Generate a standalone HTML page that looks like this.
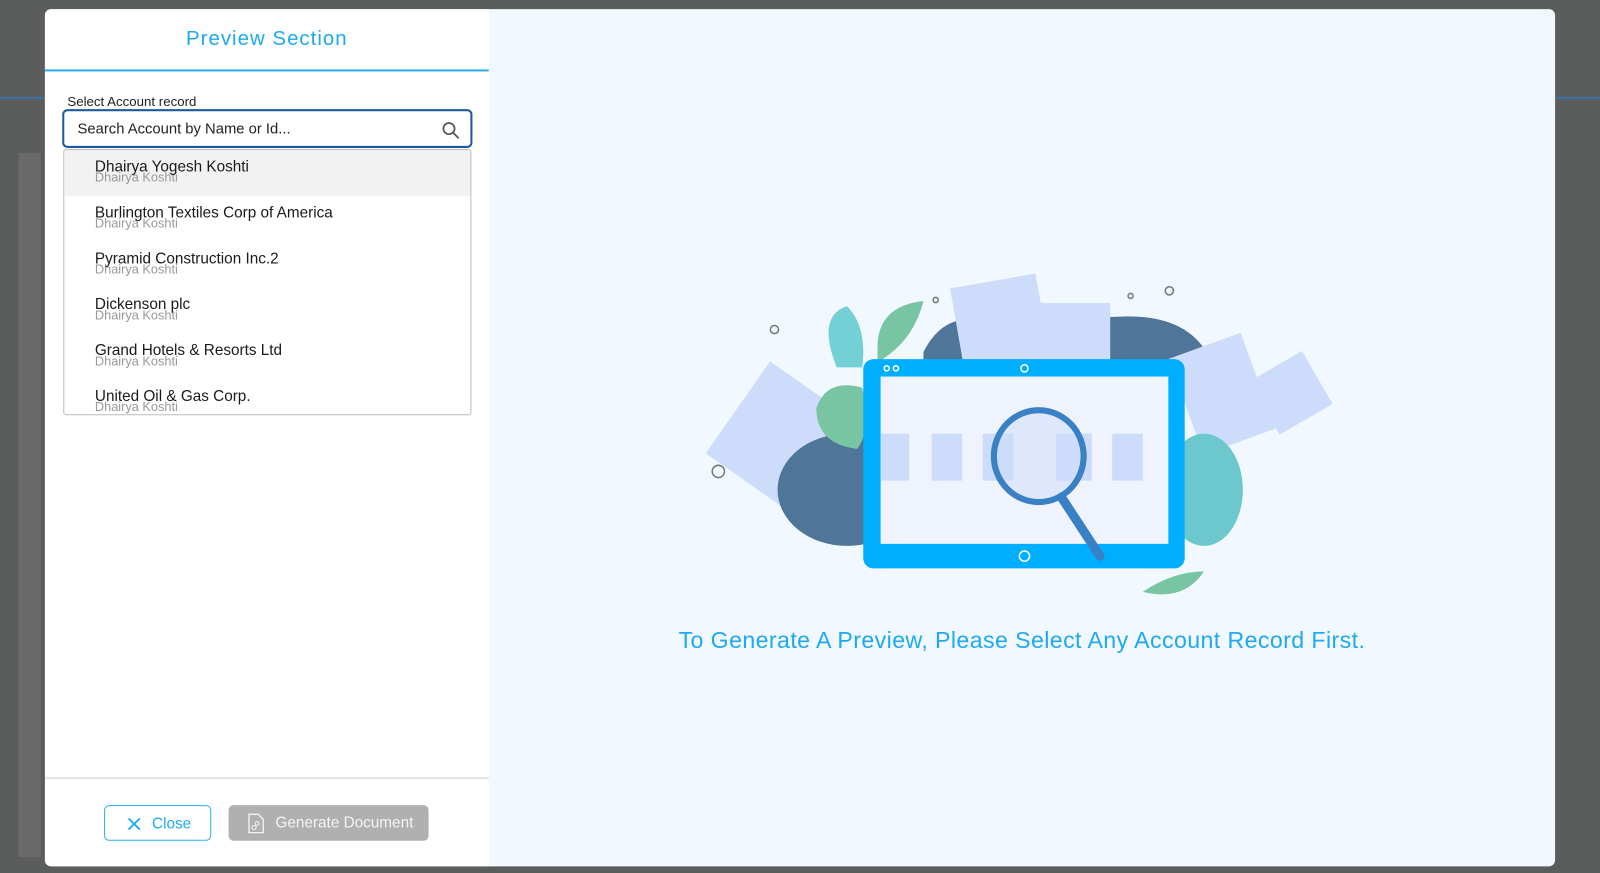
<!DOCTYPE html>
<html><head><style>
*{margin:0;padding:0;box-sizing:border-box}
body{width:1600px;height:873px;background:#5b5c5c;font-family:"Liberation Sans",Arial,sans-serif;position:relative;overflow:hidden}
#w{position:absolute;left:0;top:0;width:1568px;height:856px;transform:scale(1.0204);transform-origin:0 0}
.modal{position:absolute;left:44px;top:9px;width:1480px;height:840px;border-radius:6px;overflow:hidden;background:#f2f8ff}
.left{position:absolute;left:0;top:0;width:435px;height:840px;background:#fff}
.title{position:absolute;top:18px;width:435px;text-align:center;color:#1ea9f0;font-size:20px;letter-spacing:1px}
.hline{position:absolute;top:59px;left:0;width:435px;height:2px;background:#2aaef0}
.lbl{position:absolute;left:22px;top:83px;font-size:13px;color:#222}
.search{position:absolute;left:17px;top:98px;width:402px;height:38px;border:2px solid #1b5aa0;border-radius:5px;font-size:14.5px;color:#222;padding:10px 0 0 13px}
.dd{position:absolute;left:18px;top:137px;width:400px;height:261px;border:1px solid #bbb;border-radius:3px;overflow:hidden;background:#fff}
.it{height:45px;position:relative}
.it.h{background:#f2f2f2}
.it .a{position:absolute;left:30px;top:8px;font-size:15px;color:#1a1a1a}
.it .b{position:absolute;left:30px;top:20px;font-size:12.5px;color:#999}
.fline{position:absolute;top:753px;left:0;width:435px;height:1px;background:#ccc}
.btn{position:absolute;top:780px;height:35px;border-radius:5px;font-size:15px}
.close{left:58px;width:105px;border:1px solid #2aaef0;color:#1ea9f0;padding:9px 0 0 46px}
.gen{left:180px;width:196px;background:#b0b0b0;color:#f4f4f4;padding:9px 0 0 46px}
.msg{position:absolute;left:435px;width:1045px;top:605px;text-align:center;font-size:22.7px;color:#1ea9f0;letter-spacing:.4px}
</style></head><body>
<div id="w">
<div style="position:absolute;left:0;top:95px;width:1568px;height:2px;background:#3d6fa8"></div>
<div style="position:absolute;left:18px;top:150px;width:22px;height:690px;background:#6a6a6a"></div>
<div class="modal">
<div class="left">
<div class="title">Preview Section</div>
<div class="hline"></div>
<div class="lbl">Select Account record</div>
<div class="search">Search Account by Name or Id...
<svg style="position:absolute;right:10px;top:10px" width="18" height="18" viewBox="0 0 18 18"><circle cx="7" cy="7" r="5.5" fill="none" stroke="#555" stroke-width="1.7"/><path d="M11 11l5.5 5.5" stroke="#555" stroke-width="1.8"/></svg></div>
<div class="dd">
<div class="it h"><div class="b">Dhairya Koshti</div><div class="a">Dhairya Yogesh Koshti</div></div>
<div class="it"><div class="b">Dhairya Koshti</div><div class="a">Burlington Textiles Corp of America</div></div>
<div class="it"><div class="b">Dhairya Koshti</div><div class="a">Pyramid Construction Inc.2</div></div>
<div class="it"><div class="b">Dhairya Koshti</div><div class="a">Dickenson plc</div></div>
<div class="it"><div class="b">Dhairya Koshti</div><div class="a">Grand Hotels &amp; Resorts Ltd</div></div>
<div class="it"><div class="b">Dhairya Koshti</div><div class="a">United Oil &amp; Gas Corp.</div></div>
</div>
<div class="fline"></div>
<div class="btn close"><svg style="position:absolute;left:22px;top:11px" width="13" height="13" viewBox="0 0 13 13"><path d="M1 1l11 11M12 1L1 12" stroke="#1ea9f0" stroke-width="1.8"/></svg>Close</div>
<div class="btn gen"><svg style="position:absolute;left:19px;top:8px" width="16" height="20" viewBox="0 0 16 20"><path d="M1 1h9l5 5v13H1z" fill="none" stroke="#f4f4f4" stroke-width="1.3"/><circle cx="9" cy="10" r="1.8" fill="none" stroke="#f4f4f4"/><circle cx="6" cy="14" r="2" fill="none" stroke="#f4f4f4"/></svg>Generate Document</div>
</div>
<svg style="position:absolute;left:646px;top:251px" width="630" height="340" viewBox="690 260 630 340">
<g fill="none" stroke="#777" stroke-width="1.5"><circle cx="759" cy="323" r="4"/><circle cx="704" cy="462" r="6"/><circle cx="917" cy="294" r="2.5"/><circle cx="1108" cy="290" r="2.5"/><circle cx="1146" cy="285" r="4"/></g>
<rect x="715" y="370" width="90" height="110" fill="#cddcfa" transform="rotate(35 760 425)"/>
<ellipse cx="830" cy="480" rx="68" ry="55" fill="#4f7698"/>
<path d="M905 345q20-40 60-30l140 -5q60 0 80 40l0 30H905z" fill="#4f7698"/>
<rect x="940" y="275" width="85" height="110" fill="#cddcfa" transform="rotate(-10 980 330)"/>
<rect x="1000" y="297" width="88" height="70" fill="#cddcfa"/>
<rect x="1160" y="335" width="75" height="100" fill="#cddcfa" transform="rotate(-20 1200 385)"/>
<rect x="1235" y="355" width="60" height="60" fill="#cddcfa" transform="rotate(-30 1265 385)"/>
<ellipse cx="1180" cy="480" rx="38" ry="55" fill="#6cc8cc"/>
<path d="M820 360q-20-50 10-60q20 20 15 60z" fill="#73d0d5"/>
<path d="M860 340q0-40 45-45q-10 40-45 60z" fill="#78c4a3"/>
<path d="M800 400q10-30 45-20q10 40-5 60q-40-5-40-40z" fill="#78c4a3"/>
<path d="M1120 580q30-20 60-20q-20 30-60 20z" fill="#78c4a3"/>
<rect x="846" y="352" width="315" height="205" rx="10" fill="#00aeff"/>
<rect x="863" y="369" width="282" height="164" fill="#eef3fd"/>
<g fill="#cddcfa"><rect x="863" y="425" width="28" height="46"/><rect x="913" y="425" width="30" height="46"/><rect x="963" y="425" width="30" height="46"/><rect x="1035" y="425" width="35" height="46"/><rect x="1090" y="425" width="30" height="46"/></g>
<g fill="none" stroke="#fff" stroke-width="1.5"><circle cx="869" cy="361" r="2.5"/><circle cx="878" cy="361" r="2.5"/><circle cx="1004" cy="361" r="3.5"/><circle cx="1004" cy="545" r="5"/></g>
<path d="M1040 487L1078 545" stroke="#3a80c4" stroke-width="9" stroke-linecap="round"/>
<ellipse cx="1018" cy="447" rx="44" ry="45" fill="#cddcfa" fill-opacity=".5" stroke="#3a80c4" stroke-width="6"/>
</svg>
<div class="msg">To Generate A Preview, Please Select Any Account Record First.</div>
</div>
</div>
</body></html>
